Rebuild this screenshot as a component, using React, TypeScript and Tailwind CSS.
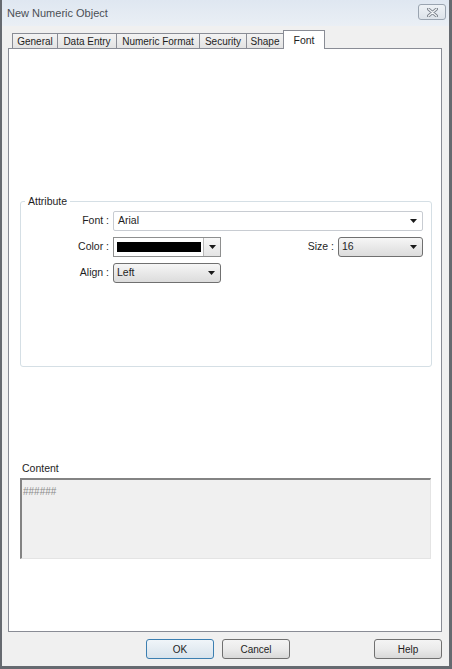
import React from 'react';

const Arrow: React.FC = () => (
  <svg width="7" height="4" viewBox="0 0 7 4" className="shrink-0">
    <path d="M0 0h7L3.5 4z" fill="#1a1a1a" />
  </svg>
);

const tabs = [
  { label: 'General', w: 'w-[45px]' },
  { label: 'Data Entry', w: 'w-[59px]' },
  { label: 'Numeric Format', w: 'w-[83px]' },
  { label: 'Security', w: 'w-[47px]' },
  { label: 'Shape', w: 'w-[37px]' },
];

const DialogButton: React.FC<{ label: string; primary?: boolean }> = ({ label, primary }) => (
  <button
    className={`w-[68px] h-[20px] rounded-[3px] border text-[10px] text-[#1e1e1e] flex items-center justify-center ${
      primary
        ? 'border-[#3c7fb1] bg-gradient-to-b from-[#f0f5f9] to-[#d8e3ec]'
        : 'border-[#707070] bg-gradient-to-b from-[#f4f4f4] via-[#ebebeb] to-[#d9d9d9]'
    }`}
  >
    {label}
  </button>
);

const App: React.FC = () => {
  return (
    <div
      className="w-[452px] h-[669px] flex flex-col overflow-hidden bg-[#f0f0f0] border-l-2 border-r-[3px] border-b-[3px] border-[#666a70] text-[#1e1e1e]"
      style={{ fontFamily: '"Liberation Sans", Arial, sans-serif' }}
    >
      {/* Title bar */}
      <div className="h-[26px] flex items-start justify-between bg-gradient-to-b from-[#dfe7f1] to-[#eaeff5]">
        <span className="pl-[5px] pt-[6px] text-[11px] leading-[14px] text-[#4b4f55]">New Numeric Object</span>
        <div className="mt-[4px] mr-[3px] w-[28px] h-[16px] rounded-[3px] border border-[#9aa4b0] bg-gradient-to-b from-[#eef2f6] to-[#dde3ea] flex items-center justify-center">
          <svg width="11" height="9" viewBox="0 0 11 9">
            <path d="M1.5 1l8 7M9.5 1l-8 7" stroke="#7c838c" strokeWidth="3" strokeLinecap="round" />
            <path d="M1.5 1l8 7M9.5 1l-8 7" stroke="#f4f6f8" strokeWidth="1.2" strokeLinecap="round" />
          </svg>
        </div>
      </div>

      {/* Tabs */}
      <div className="mt-[4px] h-[18px] flex items-end pl-[10px]">
        {tabs.map((t) => (
          <div
            key={t.label}
            className={`${t.w} h-[15px] border-t border-l border-[#898c95] bg-gradient-to-b from-[#f3f3f3] to-[#e3e3e3] flex items-center justify-center pt-px text-[10px] leading-none whitespace-nowrap`}
          >
            {t.label}
          </div>
        ))}
        <div className="relative z-10 w-[42px] h-[19px] -mb-px border-t border-x border-[#898c95] bg-white flex items-start justify-center pt-[4px] text-[10.5px] leading-none">
          Font
        </div>
      </div>

      {/* Tab panel */}
      <div className="ml-[6px] w-[434px] h-[584px] border border-[#898c95] bg-white flex flex-col text-[10.5px]">
        {/* Attribute group */}
        <div className="relative mt-[152px] ml-[11px] w-[412px] h-[166px] rounded-[3px] border border-[#d5dfe5] pt-[9px]">
          <span className="absolute -top-[8px] left-[4px] px-[3px] bg-white leading-[14px]">Attribute</span>
          <div className="flex flex-col gap-[6px]">
            <div className="flex items-center h-[20px]">
              <span className="w-[92px] pr-[4px] text-right">Font :</span>
              <div className="w-[310px] h-[20px] rounded-[2px] border border-[#c8ccd2] bg-white flex items-center justify-between pl-[4px] pr-[5px]">
                <span>Arial</span>
                <Arrow />
              </div>
            </div>
            <div className="flex items-center h-[20px]">
              <span className="w-[92px] pr-[4px] text-right">Color :</span>
              <div className="w-[108px] h-[20px] border border-[#8e8f8f] bg-white flex items-center">
                <div className="ml-[3px] w-[84px] h-[10px] bg-black" />
                <div className="ml-[2px] h-full w-px bg-[#b8b8b8]" />
                <div className="flex-1 h-full bg-gradient-to-b from-[#f8f8f8] to-[#e4e4e4] flex items-center justify-center">
                  <Arrow />
                </div>
              </div>
              <div className="flex-1" />
              <span className="pr-[4px]">Size :</span>
              <div className="mr-[8px] w-[85px] h-[20px] rounded-[3px] border border-[#707070] bg-gradient-to-b from-[#f6f6f6] to-[#dcdcdc] flex items-center justify-between pl-[3px] pr-[5px]">
                <span>16</span>
                <Arrow />
              </div>
            </div>
            <div className="flex items-center h-[20px]">
              <span className="w-[92px] pr-[4px] text-right">Align :</span>
              <div className="w-[108px] h-[20px] rounded-[3px] border border-[#707070] bg-gradient-to-b from-[#f6f6f6] to-[#dcdcdc] flex items-center justify-between pl-[3px] pr-[5px]">
                <span>Left</span>
                <Arrow />
              </div>
            </div>
          </div>
        </div>

        {/* Content */}
        <span className="mt-[94px] ml-[13px] leading-[14px]">Content</span>
        <div className="mt-[3px] ml-[11px] w-[411px] h-[81px] border-t-2 border-l-2 border-r border-b border-t-[#838383] border-l-[#838383] border-r-[#e4e4e4] border-b-[#e4e4e4] bg-[#f0f0f0] px-[1px] pt-[4px]">
          <span className="text-[10px] leading-[12px] text-[#8a8a8a]">######</span>
        </div>
      </div>

      {/* Buttons */}
      <div className="mt-[7px] h-[20px] flex items-center pl-[144px]">
        <DialogButton label="OK" primary />
        <div className="w-[8px]" />
        <DialogButton label="Cancel" />
        <div className="w-[84px]" />
        <DialogButton label="Help" />
      </div>
    </div>
  );
};

export default App;
